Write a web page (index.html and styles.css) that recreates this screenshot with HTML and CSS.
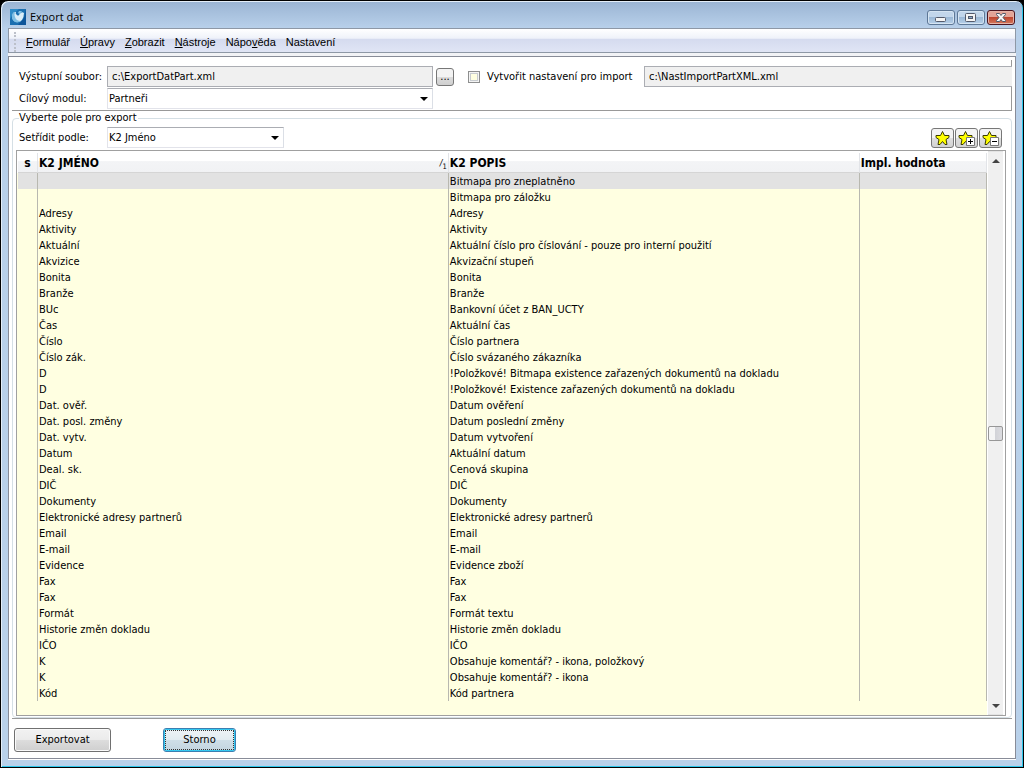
FILE: index.html
```html
<!DOCTYPE html>
<html lang="cs">
<head>
<meta charset="utf-8">
<title>Export dat</title>
<link rel="stylesheet" href="styles.css">
</head>
<body>
<div class="window">

  <div class="titlebar">
    <svg class="logo" width="16" height="16" viewBox="0 0 16 16">
      <rect width="16" height="16" fill="#1a6fb0"/>
      <path d="M0 0h9L3 5 0 10z" fill="#2f8cc8"/>
      <path d="M16 0v16H8l6-7z" fill="#0d559a"/>
      <path d="M3 4Q1 9 4 12Q8 15 12 11Q14 8 14 4Q11 2 9 6Q8 7 7 6Q5 5 6 3Q4 3 3 4z" fill="#d9edf8"/>
      <path d="M3 4Q0 10 5 13Q9 14 11 12Q6 12 5 8Q4 6 5 3zM9 2L8 4l2 1 2-3z" fill="#7dbfe4"/>
    </svg>
    <span class="title">Export dat</span>
    <button class="winbtn" aria-label="Minimalizovat">
      <svg width="26" height="13" viewBox="0 0 26 13"><rect x="7.500" y="6.500" width="10" height="4" rx="1" fill="#f4f4f4" stroke="#535a6b"/></svg>
    </button>
    <button class="winbtn" aria-label="Maximalizovat">
      <svg width="26" height="13" viewBox="0 0 26 13"><rect x="7.500" y="2.500" width="10" height="8" rx="1" fill="#f4f4f4" stroke="#535a6b"/><rect x="10.500" y="5.500" width="4" height="2" fill="#8ba9c9" stroke="#535a6b"/></svg>
    </button>
    <button class="winbtn close" aria-label="Zavřít">
      <svg width="26" height="13" viewBox="0 0 26 13"><path d="M8.500 2.500h3l1.500 2 1.500-2h3v1l-2.500 3 2.500 3v1h-3l-1.500-2-1.500 2h-3v-1l2.500-3-2.500-3z" fill="#f6f6f6" stroke="#535a6b"/></svg>
    </button>
  </div>

  <nav class="menu">
    <a href="#"><u>F</u>ormulář</a>
    <a href="#"><u>Ú</u>pravy</a>
    <a href="#"><u>Z</u>obrazit</a>
    <a href="#"><u>N</u>ástroje</a>
    <a href="#">Nápo<u>v</u>ěda</a>
    <a href="#">Nastavení</a>
  </nav>

  <div class="client">
    <div class="files">
      <div class="row">
        <label class="caption" for="output">Výstupní soubor:</label>
        <input class="path" id="output" type="text" value="c:\ExportDatPart.xml">
        <button class="dots">...</button>
        <input class="check" id="create" type="checkbox">
        <label class="checklabel" for="create">Vytvořit nastavení pro import</label>
        <input class="path import" type="text" aria-label="Soubor nastavení" value="c:\NastImportPartXML.xml">
      </div>
      <div class="row">
        <label class="caption" for="module">Cílový modul:</label>
        <span class="combo wide"><select id="module"><option>Partneři</option></select></span>
      </div>
    </div>

    <fieldset class="fields">
      <legend>Vyberte pole pro export</legend>
      <div class="row sort">
        <label class="caption" for="sort">Setřídit podle:</label>
        <span class="combo"><select id="sort"><option>K2 Jméno</option></select></span>
        <div class="tools">
          <button aria-label="Označit">
            <svg width="20" height="16" viewBox="0 0 20 16"><path class="star" d="M10.500 1.500l2 4h4.500v2l-3 2 1 5h-2l-2.500-3-2.500 3H6l1-5-3-2v-2h4.500z"/></svg>
          </button>
          <button aria-label="Označit vše">
            <svg width="20" height="16" viewBox="0 0 20 16"><path class="star" d="M9.500 1.500l2 4H16v2l-3 2 1 5h-2l-2.500-3-2.500 3H5l1-5-3-2v-2h4.500z"/><path class="sign" d="M10.500 7.500h8v8h-8z"/><path d="M12 11.500h5M14.500 9v5" stroke="#000"/></svg>
          </button>
          <button aria-label="Zrušit označení">
            <svg width="20" height="16" viewBox="0 0 20 16"><path class="star" d="M9.500 1.500l2 4H16v2l-3 2 1 5h-2l-2.500-3-2.500 3H5l1-5-3-2v-2h4.500z"/><path class="sign" d="M10.500 7.500h8v8h-8z"/><path d="M12 11.500h5" stroke="#000"/></svg>
          </button>
        </div>
      </div>

      <div class="list">
        <div class="listbody">
          <table>
            <colgroup><col class="c-s"><col class="c-name"><col class="c-desc"><col class="c-val"></colgroup>
            <thead>
              <tr>
                <th>s</th>
                <th><div class="sorted">K2 JMÉNO <span class="order"><i>/</i><sub>1</sub></span></div></th>
                <th>K2 POPIS</th>
                <th>Impl. hodnota</th>
              </tr>
            </thead>
            <tbody>
              <tr class="selected"><td></td><td></td><td>Bitmapa pro zneplatněno</td><td></td></tr>
              <tr><td></td><td></td><td>Bitmapa pro záložku</td><td></td></tr>
              <tr><td></td><td>Adresy</td><td>Adresy</td><td></td></tr>
              <tr><td></td><td>Aktivity</td><td>Aktivity</td><td></td></tr>
              <tr><td></td><td>Aktuální</td><td>Aktuální číslo pro číslování - pouze pro interní použití</td><td></td></tr>
              <tr><td></td><td>Akvizice</td><td>Akvizační stupeň</td><td></td></tr>
              <tr><td></td><td>Bonita</td><td>Bonita</td><td></td></tr>
              <tr><td></td><td>Branže</td><td>Branže</td><td></td></tr>
              <tr><td></td><td>BUc</td><td>Bankovní účet z BAN_UCTY</td><td></td></tr>
              <tr><td></td><td>Čas</td><td>Aktuální čas</td><td></td></tr>
              <tr><td></td><td>Číslo</td><td>Číslo partnera</td><td></td></tr>
              <tr><td></td><td>Číslo zák.</td><td>Číslo svázaného zákazníka</td><td></td></tr>
              <tr><td></td><td>D</td><td>!Položkové! Bitmapa existence zařazených dokumentů na dokladu</td><td></td></tr>
              <tr><td></td><td>D</td><td>!Položkové! Existence zařazených dokumentů na dokladu</td><td></td></tr>
              <tr><td></td><td>Dat. ověř.</td><td>Datum ověření</td><td></td></tr>
              <tr><td></td><td>Dat. posl. změny</td><td>Datum poslední změny</td><td></td></tr>
              <tr><td></td><td>Dat. vytv.</td><td>Datum vytvoření</td><td></td></tr>
              <tr><td></td><td>Datum</td><td>Aktuální datum</td><td></td></tr>
              <tr><td></td><td>Deal. sk.</td><td>Cenová skupina</td><td></td></tr>
              <tr><td></td><td>DIČ</td><td>DIČ</td><td></td></tr>
              <tr><td></td><td>Dokumenty</td><td>Dokumenty</td><td></td></tr>
              <tr><td></td><td>Elektronické adresy partnerů</td><td>Elektronické adresy partnerů</td><td></td></tr>
              <tr><td></td><td>Email</td><td>Email</td><td></td></tr>
              <tr><td></td><td>E-mail</td><td>E-mail</td><td></td></tr>
              <tr><td></td><td>Evidence</td><td>Evidence zboží</td><td></td></tr>
              <tr><td></td><td>Fax</td><td>Fax</td><td></td></tr>
              <tr><td></td><td>Fax</td><td>Fax</td><td></td></tr>
              <tr><td></td><td>Formát</td><td>Formát textu</td><td></td></tr>
              <tr><td></td><td>Historie změn dokladu</td><td>Historie změn dokladu</td><td></td></tr>
              <tr><td></td><td>IČO</td><td>IČO</td><td></td></tr>
              <tr><td></td><td>K</td><td>Obsahuje komentář? - ikona, položkový</td><td></td></tr>
              <tr><td></td><td>K</td><td>Obsahuje komentář? - ikona</td><td></td></tr>
              <tr><td></td><td>Kód</td><td>Kód partnera</td><td></td></tr>
            </tbody>
          </table>
        </div>
        <div class="scroll">
          <button class="up" aria-label="Nahoru"></button>
          <div class="track"><div class="thumb"></div></div>
          <button class="down" aria-label="Dolů"></button>
        </div>
      </div>
    </fieldset>

    <div class="actions">
      <button class="export">Exportovat</button>
      <button class="cancel">Storno</button>
    </div>
  </div>

</div>
</body>
</html>
```
FILE: styles.css
```css
* {
  box-sizing: border-box;
}

body {
  margin: 0;
  background: #000;
  font-family: "DejaVu Sans Condensed", "Open Sans", sans-serif;
  font-size: 11px;
  line-height: 14px;
  color: #000;
}

button, input, select {
  font: inherit;
  color: inherit;
  margin: 0;
  padding: 0;
}

/* window frame */
.window {
  display: flex;
  flex-direction: column;
  min-height: 100vh;
  padding: 0 6px 7px;
  border: 1px solid #000;
  border-radius: 8px 8px 0 0;
  background: linear-gradient(#9ab4d3, #b8d0ea 27px, #b9d1ea);
  box-shadow: inset 1px 1px 0 #e4eef8, inset -1px -1px 0 #2cc6ea;
}

.titlebar {
  display: flex;
  align-items: center;
  height: 27px;
  padding: 5px 2px 0 3px;
  gap: 2px;
}

.title {
  flex: 1;
  margin-left: 2px;
  font-family: "Open Sans", sans-serif;
  font-size: 11px;
}

.winbtn {
  width: 28px;
  height: 15px;
  border: 1px solid #5d7796;
  border-radius: 3px;
  background: linear-gradient(#c2d6eb 50%, #9cb9d7 50%, #b6cfe8);
  box-shadow: inset 0 0 0 1px #d5e4f2;
}

.winbtn svg {
  display: block;
}

.winbtn.close {
  border-color: #4d1520;
  background: linear-gradient(#e3a497 50%, #bf4630 50%, #d3795d);
  box-shadow: inset 0 0 0 1px #e5b3a8;
}

.menu {
  display: flex;
  align-items: center;
  gap: 10px;
  height: 25px;
  margin: 0 1px 3px;
  padding: 2px 0 0 17px;
  border: 1px solid #8e98a6;
  background: linear-gradient(#fff, #eff2fa 40%, #d5dbef 45%, #e0e5f5);
  font-family: "Liberation Sans", sans-serif;
  box-shadow: 0 3px #f2f3f6;
  position: relative;
}

/* grip */
.menu::before {
  content: "";
  position: absolute;
  left: 5px;
  top: 3px;
  bottom: 0;
  border-left: 2px dotted #bcc0ca;
}

.menu a {
  color: #000;
  text-decoration: none;
}

.client {
  flex: 1;
  display: flex;
  flex-direction: column;
  margin: 0 1px 1px;
  padding: 3px 3px 6px;
  border: 1px solid #888c98;
  background: #fff;
  box-shadow: 0 1px #fff;
}

.row {
  display: flex;
  align-items: center;
}

.caption {
  width: 88px;
}

/* output files */
.files {
  padding: 6px 0 1px 7px;
  border-right: 1px solid #999;
  border-bottom: 1px solid #999;
}

.files .row + .row {
  margin-top: 1px;
}

.path {
  width: 326px;
  height: 21px;
  padding-left: 4px;
  border: 1px solid #abadb3;
  background: #f0f0f0;
  outline: none;
}

.path.import {
  flex: 1;
  margin-right: -1px;
  border-right: none;
}

.dots {
  width: 18px;
  height: 18px;
  margin: 0 14px 0 3px;
  border: 1px solid #777;
  border-radius: 3px;
  background: linear-gradient(#f3f3f3 50%, #dcdcdc 50%, #d0d0d0);
}

.check {
  appearance: none;
  width: 12px;
  height: 12px;
  border: 1px solid #8e8f8f;
  background: #ffffe1;
  box-shadow: inset 0 0 0 1px #f4f4f4, inset 0 0 0 2px #c8ccd0;
}

.checklabel {
  width: 157px;
  margin-left: 7px;
  white-space: nowrap;
}

.combo {
  position: relative;
  width: 177px;
  height: 21px;
}

.combo.wide {
  width: 326px;
}

.combo select {
  appearance: none;
  width: 100%;
  height: 100%;
  padding: 0 20px 0 1px;
  border: 1px solid #e2e3ea;
  border-top-color: #abadb3;
  border-right-color: #dbdfe6;
  background: #fff;
  outline: none;
}

.combo::after {
  content: "";
  position: absolute;
  right: 5px;
  top: 9px;
  border: 4px solid transparent;
  border-top-color: #000;
  border-bottom: none;
}

/* field list */
.fields {
  flex: 1;
  display: flex;
  flex-direction: column;
  min-width: 0;
  margin: 0;
  padding: 0 5px 0 3px;
  border: 1px solid #d5dfe5;
  border-radius: 4px;
}

.fields legend {
  margin-left: 3px;
  padding: 0 1px 0 0;
}

.sort {
  margin: 2px 0 2px 3px;
}

.tools {
  display: flex;
  gap: 1px;
  margin-left: auto;
  margin-right: 4px;
}

.tools button {
  width: 23px;
  height: 20px;
  border: 1px solid #777;
  border-radius: 3px;
  background: linear-gradient(#f3f3f3 50%, #dedede 50%, #d2d2d2);
}

.tools svg {
  display: block;
}

.star {
  fill: #ff0;
  stroke: #3a3a00;
}

.sign {
  fill: #fff;
  stroke: #777;
}

.list {
  flex: 1;
  display: flex;
  border: 1px solid #a0a0a0;
  background: #fff;
}

.listbody {
  flex: 1;
  padding: 2px 0 14px 1px;
  background: linear-gradient(#fff 22px, #ffffe1 22px);
}

table {
  width: 100%;
  table-layout: fixed;
  border-collapse: separate;
  border-spacing: 0;
}

.c-s { width: 20px; }
.c-name, .c-desc { width: 42.4%; }

th {
  height: 20px;
  padding: 0 1px;
  border-right: 1px solid #e2e4e8;
  border-bottom: 1px solid #d5d5d5;
  background: linear-gradient(#fff 40%, #f3f4f6 45%, #f1f2f4);
  font-size: 12px;
  text-align: left;
  white-space: nowrap;
}

th:first-child {
  text-align: center;
}

.sorted {
  display: flex;
  justify-content: space-between;
}

.order {
  font-size: 9px;
  font-weight: normal;
}

.order sub {
  line-height: 0;
}

td {
  height: 16px;
  padding: 1px 1px 0;
  border-right: 1px solid #b8b8b0;
  line-height: 15px;
  white-space: nowrap;
}

.selected td {
  background: #e2e2e2;
}

.scroll {
  display: flex;
  flex-direction: column;
  width: 15px;
  margin: 0 2px 0 1px;
  border: 1px solid #e3e3e3;
  border-width: 1px 0;
  background: #f0f0f0;
}

.scroll button {
  display: flex;
  align-items: center;
  justify-content: center;
  height: 17px;
  border: none;
  background: none;
}

.scroll button::before {
  content: "";
  border: 4px solid transparent;
}

.scroll .up::before {
  border-top: none;
  border-bottom-color: #444;
}

.scroll .down::before {
  border-bottom: none;
  border-top-color: #444;
}

.track {
  flex: 1;
  display: flex;
  flex-direction: column;
  justify-content: center;
}

.thumb {
  width: 15px;
  height: 15px;
  border: 1px solid #979797;
  border-radius: 2px;
  background: linear-gradient(90deg, #f5f5f5 50%, #d2d3d8 50%, #dcdce0);
}

/* bottom buttons */
.actions {
  display: flex;
  gap: 52px;
  padding: 9px 2px 0;
  border-top: 1px solid #999;
}

.actions button {
  height: 24px;
  border: 1px solid #707070;
  border-radius: 3px;
  background: linear-gradient(#f2f2f2, #ebebeb 50%, #dddddd 50%, #cfcfcf);
  box-shadow: inset 0 0 0 1px #fafafa;
}

.actions .export {
  width: 97px;
}

.actions .cancel {
  width: 73px;
  border-color: #3c7fb1;
  background: linear-gradient(#eef3f6, #e2ecf1 50%, #cfdfe8 50%, #c3d5e0);
  box-shadow: inset 0 0 0 1px #35c8f0;
  outline: 1px dotted #333;
  outline-offset: -3px;
}
```
